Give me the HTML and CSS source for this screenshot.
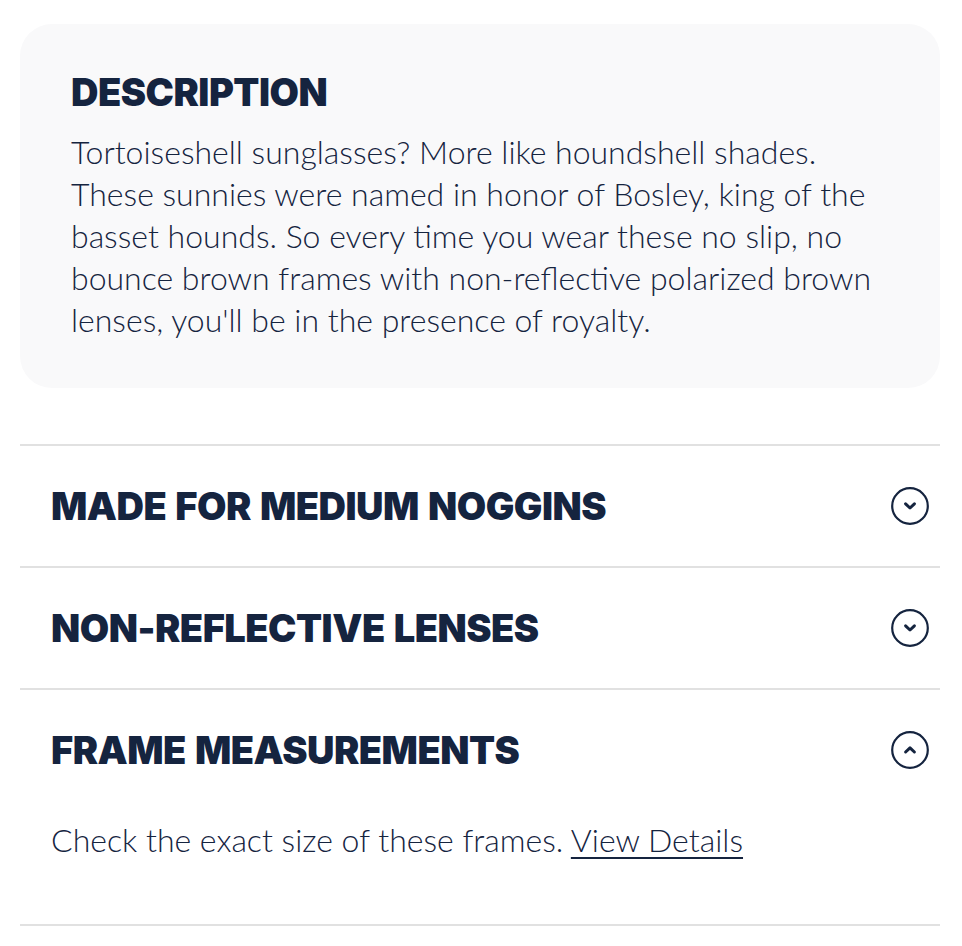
FILE: index.html
```html
<!DOCTYPE html>
<html lang="en">
<head>
  <meta charset="UTF-8">
  <meta name="viewport" content="width=device-width, initial-scale=1">
  <title>Bosley Sunglasses</title>
  <link rel="stylesheet" href="styles.css">
</head>
<body>

  <div class="product-info">
    <section class="description">
      <h2>Description</h2>
      <p>Tortoiseshell sunglasses? More like houndshell shades. These sunnies were named in honor of Bosley, king of the basset hounds. So every time you wear these no slip, no bounce brown frames with non-reflective polarized brown lenses, you'll be in the presence of royalty.</p>
    </section>

    <div class="accordion">
      <div class="acc-item">
        <button class="acc-head" type="button">
          <span class="acc-title">Made for medium noggins</span>
          <svg class="acc-icon" viewBox="0 0 38 38" width="38" height="38">
            <circle cx="19" cy="19" r="17.8" />
            <path d="M14.6 16.8 L19 21 L23.4 16.8" class="chev" />
          </svg>
        </button>
      </div>

      <div class="acc-item">
        <button class="acc-head" type="button">
          <span class="acc-title">Non-reflective lenses</span>
          <svg class="acc-icon" viewBox="0 0 38 38" width="38" height="38">
            <circle cx="19" cy="19" r="17.8" />
            <path d="M14.6 16.8 L19 21 L23.4 16.8" class="chev" />
          </svg>
        </button>
      </div>

      <div class="acc-item open">
        <button class="acc-head" type="button">
          <span class="acc-title">Frame measurements</span>
          <svg class="acc-icon" viewBox="0 0 38 38" width="38" height="38">
            <circle cx="19" cy="19" r="17.8" />
            <path d="M14.6 21 L19 16.8 L23.4 21" class="chev" />
          </svg>
        </button>
        <div class="acc-body">
          Check the exact size of these frames. <a href="#">View Details</a>
        </div>
      </div>
    </div>
  </div>

</body>
</html>
```

FILE: styles.css
```css
body {
  margin: 0;
  background: #fff;
  color: #15243f;
  font-family: 'Lato', sans-serif;
}

.product-info {
  width: 920px;
  margin-left: 20px;
  padding-top: 24px;
}

/* grey rounded card at the top */
.description {
  background: #f9f9fa;
  border-radius: 32px;
  padding: 46px 40px 47px 51px;
}

.description h2,
.acc-title {
  font-family: 'Inter', sans-serif;
  font-size: 38px;
  font-weight: 900;
  text-transform: uppercase;
  letter-spacing: -0.5px;
  word-spacing: 2px;
}

.description h2 {
  margin: 0 0 17px;
  line-height: 44px;
}

.description p {
  margin: 0;
  font-size: 32px;
  line-height: 42px;
  font-weight: 300;
}

.accordion {
  margin-top: 56px;
}

.acc-item {
  border-top: 2px solid #e1e1e1;
}

.acc-item:last-child {
  border-bottom: 2px solid #e1e1e1;
}

.acc-head {
  display: flex;
  align-items: center;
  justify-content: space-between;
  width: 100%;
  height: 120px;
  padding: 0 11px 0 31px;
  border: none;
  background: none;
  color: inherit;
  font-family: inherit;
  cursor: pointer;
}

.acc-icon circle {
  fill: none;
  stroke: #15243f;
  stroke-width: 2.2;
}

.acc-icon .chev {
  fill: none;
  stroke: #15243f;
  stroke-width: 3;
  stroke-linecap: round;
  stroke-linejoin: round;
}

.acc-body {
  padding: 9px 31px 63px;
  font-size: 32px;
  line-height: 42px;
  font-weight: 300;
}

.acc-body a {
  color: inherit;
  text-decoration: underline;
  text-decoration-thickness: 2px;
  text-underline-offset: 5px;
}
```
